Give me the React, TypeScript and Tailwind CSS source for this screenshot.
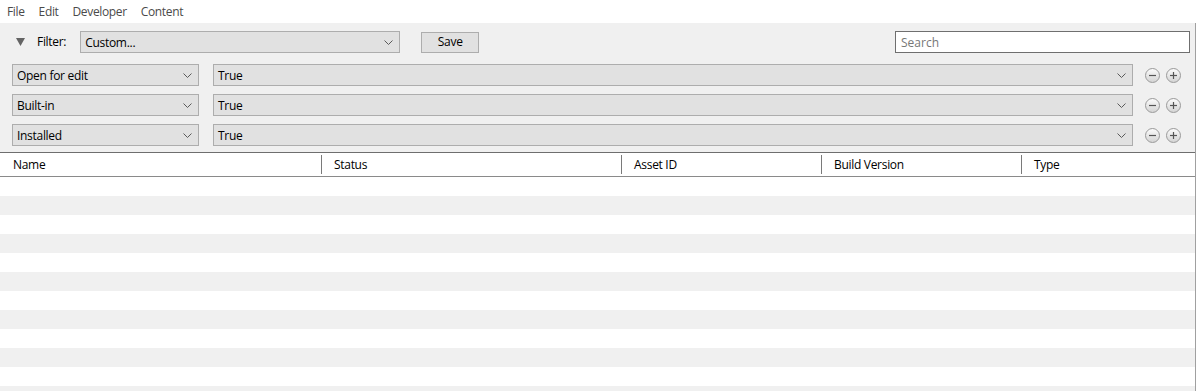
import { useState } from "react"

const font = { fontFamily: '"Open Sans", "Noto Sans", sans-serif' }

function Chevron() {
  return (
    <svg width="9" height="5" viewBox="0 0 9 5" className="shrink-0">
      <path d="M0.5 0.5 L4.5 4.5 L8.5 0.5" fill="none" stroke="#5a5a5a" strokeWidth="1" />
    </svg>
  )
}

function Combo({ value, className }: { value: string; className: string }) {
  return (
    <div
      className={`flex items-center justify-between h-[22px] bg-[#e1e1e1] border border-[#adadad] pl-[4px] pr-[6px] text-[12px] text-black ${className}`}
    >
      <span className="leading-none pt-[2px] tracking-[-0.3px]">{value}</span>
      <Chevron />
    </div>
  )
}

function RoundBtn({ plus }: { plus?: boolean }) {
  return (
    <div className="w-[15px] h-[15px] rounded-full border border-[#9a9a9a] bg-gradient-to-b from-[#fbfbfb] to-[#d4d4d4] flex items-center justify-center">
      <svg width="9" height="9" viewBox="0 0 9 9">
        <path d="M1 4.5 H8" stroke="#555" strokeWidth="1.2" />
        {plus && <path d="M4.5 1 V8" stroke="#555" strokeWidth="1.2" />}
      </svg>
    </div>
  )
}

const filters = ["Open for edit", "Built-in", "Installed"]
const columns = [
  { name: "Name", w: "w-[321px]" },
  { name: "Status", w: "w-[300px]" },
  { name: "Asset ID", w: "w-[200px]" },
  { name: "Build Version", w: "w-[200px]" },
  { name: "Type", w: "flex-1" },
]

export default function App() {
  const [search, setSearch] = useState("")
  return (
    <div className="w-[1196px] h-[391px] bg-white overflow-hidden flex flex-col" style={font}>
      {/* menu */}
      <div className="h-[23px] flex items-center pl-[7px] gap-[14px] text-[12px] text-[#4a4a4a] tracking-[-0.35px] shrink-0">
        <span>File</span>
        <span>Edit</span>
        <span>Developer</span>
        <span>Content</span>
      </div>

      <div className="flex-1 flex flex-col border-r border-[#a0a0a0]">
        {/* filter bar */}
        <div className="bg-[#f0f0f0] pl-[12px] pr-[5px] pt-[8px] pb-[6px] border-b border-[#6e6e6e]">
          <div className="flex items-center h-[22px]">
            <svg width="9" height="8" viewBox="0 0 9 8" className="ml-[4px]">
              <path d="M0 0 H9 L4.5 8 Z" fill="#646464" />
            </svg>
            <span className="ml-[12px] text-[12px] text-black tracking-[-0.3px]">Filter:</span>
            <Combo value="Custom..." className="ml-[14px] w-[320px]" />
            <button className="ml-[21px] w-[58px] h-[21px] bg-[#e1e1e1] border border-[#adadad] text-[12px] text-black leading-none tracking-[-0.3px]">
              Save
            </button>
            <input
              value={search}
              onChange={(e) => setSearch(e.target.value)}
              placeholder="Search"
              className="ml-auto w-[295px] h-[22px] bg-white border border-[#6f6f6f] px-[5px] text-[12px] outline-none placeholder:text-[#777]"
            />
          </div>
          <div className="flex flex-col gap-[8px] mt-[11px]">
            {filters.map((f) => (
              <div key={f} className="flex items-center">
                <Combo value={f} className="w-[187px]" />
                <Combo value="True" className="ml-[14px] flex-1" />
                <div className="flex items-center gap-[6px] ml-[12px] mr-[9px]">
                  <RoundBtn />
                  <RoundBtn plus />
                </div>
              </div>
            ))}
          </div>
        </div>

        {/* table header */}
        <div className="h-[24px] flex border-b border-[#8a8a8a] shrink-0">
          {columns.map((c, i) => (
            <div key={c.name} className={`${c.w} flex items-center`}>
              {i > 0 && <div className="w-px h-[19px] bg-[#7a7a7a]" />}
              <span className={`${i > 0 ? "pl-[12px]" : "pl-[13px]"} text-[12px] text-black tracking-[-0.3px]`}>{c.name}</span>
            </div>
          ))}
        </div>

        {/* rows */}
        <div className="flex flex-col">
          {Array.from({ length: 12 }).map((_, i) => (
            <div key={i} className={`h-[19px] shrink-0 ${i % 2 === 1 ? "bg-[#f0f0f0]" : "bg-white"}`} />
          ))}
        </div>
      </div>
    </div>
  )
}
